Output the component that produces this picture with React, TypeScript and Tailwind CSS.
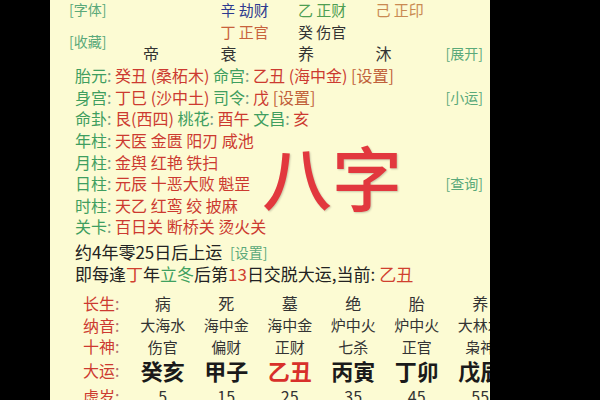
import React from 'react';

const FONT = { fontFamily: '"Noto Sans CJK SC", "Noto Sans", sans-serif' };

const G = 'text-[#3f9e5f]';
const R = 'text-[#cc3a30]';

function Tab({ label }: { label: string }) {
  return <span className="text-[14px] text-[#5aa97a] whitespace-nowrap">[{label}]</span>;
}

function InfoRow({ label, children, right }: { label: string; children: React.ReactNode; right?: string }) {
  return (
    <div className="flex h-[21.6px] items-center justify-between text-[16px] leading-none">
      <div className="pl-[6px] whitespace-pre">
        <span className={G}>{label}</span>
        <span className="text-[#7a9c86]">: </span>
        {children}
      </div>
      {right && <Tab label={right} />}
    </div>
  );
}

const table = [
  { label: '长生', vals: ['病', '死', '墓', '绝', '胎', '养'], h: 'h-[22px]', cls: 'text-[16px] text-[#333]' },
  { label: '纳音', vals: ['大海水', '海中金', '海中金', '炉中火', '炉中火', '大林木'], h: 'h-[22px]', cls: 'text-[15px] text-[#333]' },
  { label: '十神', vals: ['伤官', '偏财', '正财', '七杀', '正官', '枭神'], h: 'h-[21px]', cls: 'text-[15px] text-[#333]' },
  { label: '大运', vals: ['癸亥', '甲子', '乙丑', '丙寅', '丁卯', '戊辰'], h: 'h-[26px]', cls: 'text-[22px] font-bold text-[#1a1a1a]' },
  { label: '虚岁', vals: ['5', '15', '25', '35', '45', '55'], h: 'h-[26px]', cls: 'text-[16px] text-[#333]' },
];

export default function App() {
  return (
    <div className="w-[600px] h-[400px] bg-black overflow-hidden" style={FONT}>
      <div className="relative ml-[50px] w-[440px] h-[400px] bg-[#fcfbd3] overflow-hidden pl-[19px] pr-[7px]">
        {/* top: pillars */}
        <div className="flex -mt-[2px]">
          <div className="w-[74px] shrink-0 flex flex-col">
            <div className="h-[22px] flex items-center"><Tab label="字体" /></div>
            <div className="h-[22px] mt-[10px] flex items-center"><Tab label="收藏" /></div>
          </div>
          <div className="flex-1 grid grid-cols-[77.5px_77.5px_77.5px_1fr] text-[15px] leading-none whitespace-nowrap">
            <div className="h-[22px]"></div>
            <div className="h-[22px] flex items-center text-[#2d3a8f]">辛 劫财</div>
            <div className="h-[22px] flex items-center text-[#4e9e52]">乙 正财</div>
            <div className="h-[22px] flex items-center text-[#c98a52]">己 正印</div>
            <div className="h-[22px]"></div>
            <div className="h-[22px] flex items-center text-[#c8623c]">丁 正官</div>
            <div className="h-[22px] flex items-center text-[#333]">癸 伤官</div>
            <div className="h-[22px]"></div>
            <div className="h-[22px] flex items-center text-[16px] text-[#333]">帝</div>
            <div className="h-[22px] flex items-center text-[16px] text-[#333]">衰</div>
            <div className="h-[22px] flex items-center text-[16px] text-[#333]">养</div>
            <div className="h-[22px] flex items-center text-[16px] text-[#333]">沐</div>
          </div>
          <div className="shrink-0 flex flex-col">
            <div className="h-[44px]"></div>
            <div className="h-[22px] flex items-center"><Tab label="展开" /></div>
          </div>
        </div>

        {/* info rows */}
        <div className="mt-[0.5px]">
          <InfoRow label="胎元">
            <span className={R}>癸丑 (桑柘木) </span>
            <span className={G}>命宫</span><span className="text-[#7a9c86]">: </span>
            <span className={R}>乙丑 (海中金) </span>
            <span className="text-[#c0603a]">[设置]</span>
          </InfoRow>
          <InfoRow label="身宫" right="小运">
            <span className={R}>丁巳 (沙中土) </span>
            <span className={G}>司令</span><span className="text-[#7a9c86]">: </span>
            <span className={R}>戊 </span>
            <span className="text-[#c0603a]">[设置]</span>
          </InfoRow>
          <InfoRow label="命卦">
            <span className={R}>艮(西四) </span>
            <span className={G}>桃花</span><span className="text-[#7a9c86]">: </span>
            <span className={R}>酉午 </span>
            <span className={G}>文昌</span><span className="text-[#7a9c86]">: </span>
            <span className={R}>亥</span>
          </InfoRow>
          <InfoRow label="年柱"><span className={R}>天医 金匮 阳刃 咸池</span></InfoRow>
          <InfoRow label="月柱"><span className={R}>金舆 红艳 铁扫</span></InfoRow>
          <InfoRow label="日柱" right="查询"><span className={R}>元辰 十恶大败 魁罡</span></InfoRow>
          <InfoRow label="时柱"><span className={R}>天乙 红鸾 绞 披麻</span></InfoRow>
          <InfoRow label="关卡"><span className={R}>百日关 断桥关 烫火关</span></InfoRow>
        </div>

        {/* luck start */}
        <div className="pl-[6px] mt-[3.5px] text-[17px] leading-none text-[#222]">
          <div className="h-[22px] flex items-center whitespace-pre">
            约4年零25日后上运  <span className="text-[14px] text-[#5aa97a]">[设置]</span>
          </div>
          <div className="h-[22px] flex items-center whitespace-pre">
            即每逢<span className="text-[#d0402f]">丁</span>年<span className="text-[#3fa160]">立冬</span>后第<span className="text-[#d0402f]">13</span>日交脱大运,当前: <span className="text-[#d0402f]">乙丑</span>
          </div>
        </div>

        {/* table */}
        <div className="mt-[7px] w-max pl-[6px]">
          {table.map(row => (
            <div key={row.label} className={`grid grid-cols-[56px_repeat(6,63.5px)] items-center ${row.h}`}>
              <div className="pl-[8px] text-[16px] leading-none text-[#cc3a30]">{row.label}<span className="text-[#b07070]">:</span></div>
              {row.vals.map((v, i) => (
                <div key={i} className={`text-center leading-none ${row.cls} ${row.label === '大运' && i === 2 ? 'text-[#d8302a]' : ''}`}>{v}</div>
              ))}
            </div>
          ))}
        </div>

        {/* big overlay title */}
        <div className="absolute left-[212px] top-[141px] text-[70px] leading-none font-medium text-[#e2383e] [text-shadow:1px_1px_2px_rgba(0,0,0,0.2)]">
          八字
        </div>
      </div>
    </div>
  );
}
